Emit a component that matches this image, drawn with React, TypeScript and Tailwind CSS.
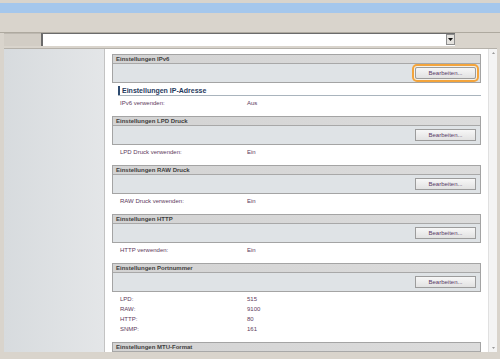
import React from "react";

interface Row {
  label: string;
  value: string;
}

interface SectionProps {
  title: string;
  rows: Row[];
  focused?: boolean;
  sub?: string;
  last?: boolean;
}

function EditButton({ focused }: { focused?: boolean }) {
  return (
    <button
      className={
        "h-[12px] w-[61px] mr-[4px] border border-[#9c9c9c] bg-gradient-to-b from-[#f7f7f7] to-[#e2e2e2] text-[6px] leading-none text-[#5a3a66] " +
        (focused ? "rounded-[2px] shadow-[0_0_0_1px_#f4f1ea,0_0_0_3px_#f3a43c]" : "")
      }
    >
      Bearbeiten...
    </button>
  );
}

function Section({ title, rows, focused, sub, last }: SectionProps) {
  return (
    <div className={last ? "" : "pb-[8px]"}>
      <div className="border border-[#a4a4a4]">
        <div className="h-[9px] bg-gradient-to-r from-[#d3d3d3] to-[#dcdcdc] border-b border-[#a8a8a8] pl-[3px] flex items-center text-[6px] font-bold leading-none text-[#3d3d3d]">
          {title}
        </div>
        {!last && (
          <div className="h-[18px] bg-[#dfe3e6] flex items-center justify-end">
            <EditButton focused={focused} />
          </div>
        )}
      </div>
      {sub && (
        <div className="mt-[3px] ml-[6px] h-[10px] flex items-center border-b border-[#a9b4bd]">
          <div className="w-[2px] h-full bg-[#2d4a70]" />
          <span className="pl-[2px] text-[7px] font-bold leading-none text-[#1f3a5e]">{sub}</span>
        </div>
      )}
      {rows.length > 0 && (
        <div className="pt-[2px]">
          {rows.map((r) => (
            <div key={r.label} className="h-[10px] flex items-center pl-[8px] text-[6px] leading-none text-[#5e3a5c]">
              <span className="w-[127px]">{r.label}</span>
              <span>{r.value}</span>
            </div>
          ))}
        </div>
      )}
    </div>
  );
}

export default function App() {
  return (
    <div className="w-[500px] h-[359px] overflow-hidden bg-[#d9d4cc] flex flex-col font-['Liberation_Sans',Arial,sans-serif]">
      <div className="h-[3px] shrink-0" />
      <div className="h-[10px] shrink-0 bg-[#a5c7ec]" />
      <div className="h-[19px] shrink-0" />
      <div className="h-px shrink-0 bg-[#aea99f]" />
      <div className="h-[13px] shrink-0 flex pl-[4px]">
        <div className="w-[37px] bg-[#d2cdc5] border-t border-[#bdb8b0]" />
        <div className="w-[414px] bg-white border-l-2 border-t border-[#6b6b6b] flex justify-end">
          <div className="w-[9px] h-[11px] bg-[#e4e2de] border border-[#8d8d8d] flex items-center justify-center">
            <svg width="5" height="3" viewBox="0 0 5 3">
              <path d="M0 0H5L2.5 3Z" fill="#111" />
            </svg>
          </div>
        </div>
      </div>
      <div className="h-[2px] shrink-0" />
      <div className="h-px shrink-0 ml-[4px] w-[493px] bg-[#b5b1aa]" />
      <div className="h-[303px] shrink-0 flex ml-[4px] w-[493px]">
        <div className="w-[101px] bg-gradient-to-r from-[#d7dbde] to-[#e4e6e8] border-r border-[#c3c3c3]" />
        <div className="w-[383px] bg-white overflow-hidden pl-[7px] pr-[7px] pt-[5px]">
          <Section
            title="Einstellungen IPv6"
            focused
            sub="Einstellungen IP-Adresse"
            rows={[{ label: "IPv6 verwenden:", value: "Aus" }]}
          />
          <Section title="Einstellungen LPD Druck" rows={[{ label: "LPD Druck verwenden:", value: "Ein" }]} />
          <Section title="Einstellungen RAW Druck" rows={[{ label: "RAW Druck verwenden:", value: "Ein" }]} />
          <Section title="Einstellungen HTTP" rows={[{ label: "HTTP verwenden:", value: "Ein" }]} />
          <Section
            title="Einstellungen Portnummer"
            rows={[
              { label: "LPD:", value: "515" },
              { label: "RAW:", value: "9100" },
              { label: "HTTP:", value: "80" },
              { label: "SNMP:", value: "161" },
            ]}
          />
          <Section title="Einstellungen MTU-Format" rows={[]} last />
        </div>
        <div className="w-[9px] bg-[#f4f4f4] border-l border-[#e0e0e0] flex flex-col justify-between items-center py-[3px]">
          <svg width="3" height="2" viewBox="0 0 3 2">
            <path d="M0 2H3L1.5 0Z" fill="#9a9a9a" />
          </svg>
          <svg width="3" height="2" viewBox="0 0 3 2">
            <path d="M0 0H3L1.5 2Z" fill="#9a9a9a" />
          </svg>
        </div>
      </div>
    </div>
  );
}
